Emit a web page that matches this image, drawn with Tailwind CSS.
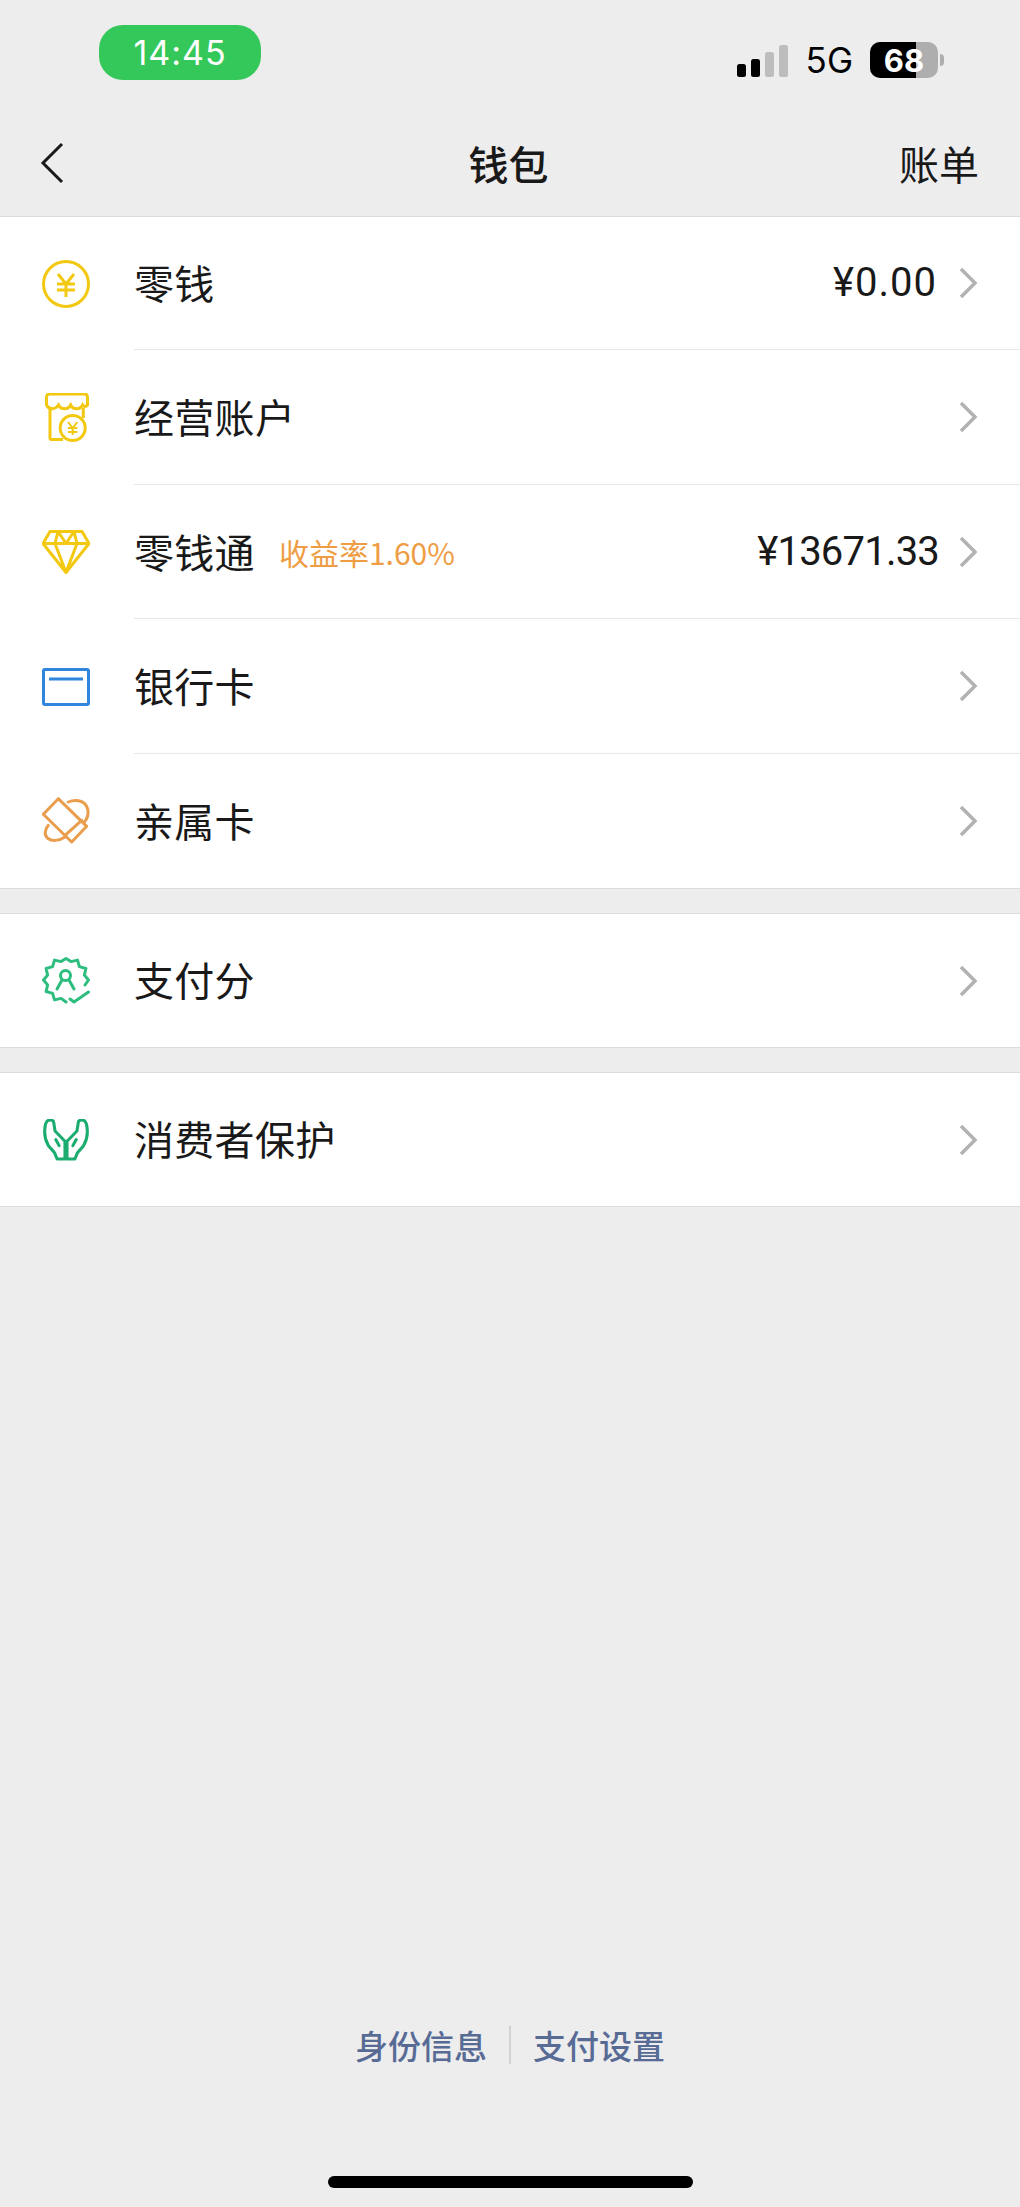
<!DOCTYPE html>
<html lang="zh-CN">
  <head>
    <meta charset="UTF-8" />
    <title>钱包</title>
    <script src="https://cdn.jsdelivr.net/npm/@tailwindcss/browser@4"></script>
  </head>
  <body class="bg-[#ededed] font-['Noto_Sans_CJK_SC',sans-serif] text-[#191919]">
    <div class="flex h-[2207px] w-[1020px] flex-col overflow-hidden">
      <!-- status bar -->
      <div class="flex h-[110px] shrink-0 items-start justify-between pl-[99px] pr-[76px]">
        <div class="mt-[25px] flex h-[55px] w-[162px] items-center justify-center rounded-[24px] bg-[#34c759] font-['Inter',sans-serif] text-[34px] tracking-[1px] text-white">14:45</div>
        <div class="mt-[42px] flex items-center">
          <svg width="52" height="32" viewBox="0 0 52 32" class="mr-[17px] mt-[2px]">
            <rect x="0" y="19" width="9" height="13" rx="2.5" fill="#000" />
            <rect x="14" y="14" width="9" height="18" rx="2.5" fill="#000" />
            <rect x="28" y="7" width="9" height="25" rx="2.5" fill="#bdbdbd" />
            <rect x="42" y="0" width="9" height="32" rx="2.5" fill="#bdbdbd" />
          </svg>
          <span class="mr-[17px] font-['Inter',sans-serif] text-[35px] leading-[36px] text-black">5G</span>
          <div class="relative flex h-[36px] w-[68px] items-center justify-center overflow-hidden rounded-[10px] bg-[#aeaeae]">
            <div class="absolute inset-y-0 left-0 w-[46px] bg-black"></div>
            <span class="relative font-['Inter',sans-serif] text-[31px] font-bold leading-none text-white">68</span>
          </div>
          <div class="ml-[2px] h-[12px] w-[4px] rounded-r-full bg-[#aeaeae]"></div>
        </div>
      </div>

      <!-- nav -->
      <div class="grid h-[107px] shrink-0 grid-cols-3 items-center border-b border-[#dcdcdc] pl-[40px] pr-[41px]">
        <svg width="24" height="42" viewBox="0 0 24 42" fill="none" stroke="#191919" stroke-width="3"><path d="M22 2 3 21l19 19" /></svg>
        <div class="pr-[2px] text-center text-[40px] font-medium leading-none">钱包</div>
        <div class="text-right text-[40px] leading-none">账单</div>
      </div>

      <!-- main group -->
      <div class="shrink-0 border-b border-[#dcdcdc] bg-white">
        <div class="flex h-[133px] items-center">
          <div class="flex w-[134px] shrink-0 justify-center pr-[3px]">
            <svg width="48" height="48" viewBox="0 0 48 48" fill="none" stroke="#f2c811" stroke-width="3"><circle cx="24" cy="24" r="22.5" /><path d="M16 14l8 10 8-10M15 24h18M15 30h18M24 24v13" /></svg>
          </div>
          <div class="flex h-full flex-1 items-center justify-between border-b border-[#e8e8e8] pr-[41px]">
            <span class="pb-[2px] text-[40px] leading-none tracking-[0.3px]">零钱</span>
            <div class="flex items-center">
              <span class="font-['Roboto',sans-serif] text-[40px] tracking-[1px]">¥0.00</span>
              <svg width="20" height="32" viewBox="0 0 20 32" fill="none" stroke="#b2b2b2" stroke-width="3.5" class="ml-[22px]"><path d="M2 2l14 14L2 30" /></svg>
            </div>
          </div>
        </div>
        <div class="flex h-[135px] items-center">
          <div class="flex w-[134px] shrink-0 justify-center pr-[3px]">
            <svg width="44" height="50" viewBox="0 0 44 50" fill="none" stroke="#f2c811" stroke-width="3" class="ml-[2px]">
              <path d="M1.500 12V4a3 3 0 0 1 3-3H39.500a3 3 0 0 1 3 3V12C41 14 39 14 37.700 12 35 17 28 17 25.700 12 23 17 16 17 13.500 12 10 17 4 17 1.500 12z" />
              <path d="M5 15V45a1.500 1.500 0 0 0 1.500 1.500H18M38.300 15V25" />
              <circle cx="27.700" cy="35" r="12.500" fill="#fff" />
              <path d="M23 29l4.700 6 4.700-6M23 35h9.400M23 39h9.400M27.700 35v7" stroke-width="2" />
            </svg>
          </div>
          <div class="flex h-full flex-1 items-center justify-between border-b border-[#e8e8e8] pr-[41px]">
            <span class="pb-[2px] text-[40px] leading-none tracking-[0.3px]">经营账户</span>
            <svg width="20" height="32" viewBox="0 0 20 32" fill="none" stroke="#b2b2b2" stroke-width="3.5"><path d="M2 2l14 14L2 30" /></svg>
          </div>
        </div>
        <div class="flex h-[134px] items-center">
          <div class="flex w-[134px] shrink-0 justify-center pr-[3px]">
            <svg width="48" height="44" viewBox="0 0 48 44" fill="none" stroke="#f2c811" stroke-width="3" stroke-linejoin="round"><path d="M8 1.500H40L47 13.500 24 42.500 1 13.500zM1 13.500H47M16 1.500 13 13.500 24 42.500 35 13.500 32 1.500M16 1.500 24 13.500 32 1.500" /></svg>
          </div>
          <div class="flex h-full flex-1 items-center justify-between border-b border-[#e8e8e8] pr-[41px]">
            <div class="flex items-center">
              <span class="pb-[2px] text-[40px] leading-none tracking-[0.3px]">零钱通</span>
              <span class="ml-[24px] text-[30px] leading-none text-[#ee9d44]">收益率1.60%</span>
            </div>
            <div class="flex items-center">
              <span class="font-['Roboto',sans-serif] text-[40px] tracking-[-0.8px]">¥13671.33</span>
              <svg width="20" height="32" viewBox="0 0 20 32" fill="none" stroke="#b2b2b2" stroke-width="3.5" class="ml-[20px]"><path d="M2 2l14 14L2 30" /></svg>
            </div>
          </div>
        </div>
        <div class="flex h-[135px] items-center">
          <div class="flex w-[134px] shrink-0 justify-center pr-[3px]">
            <svg width="48" height="38" viewBox="0 0 48 38" fill="none" stroke="#2f86dc" stroke-width="3"><rect x="1.500" y="1.500" width="45" height="35" rx="1.500" /><path d="M7 11h34" /></svg>
          </div>
          <div class="flex h-full flex-1 items-center justify-between border-b border-[#e8e8e8] pr-[41px]">
            <span class="pb-[2px] text-[40px] leading-none tracking-[0.3px]">银行卡</span>
            <svg width="20" height="32" viewBox="0 0 20 32" fill="none" stroke="#b2b2b2" stroke-width="3.5"><path d="M2 2l14 14L2 30" /></svg>
          </div>
        </div>
        <div class="flex h-[134px] items-center">
          <div class="flex w-[134px] shrink-0 justify-center pr-[3px]">
            <svg width="48" height="48" viewBox="0 0 48 48" fill="none" stroke="#ea9e4d" stroke-width="3" stroke-linejoin="round" stroke-linecap="round">
              <path d="M16.300 1.700 44.700 29.300 29.700 45 1.300 17.300z" />
              <path d="M23 38.300 39.700 23.300" />
              <path d="M26.300 5C33 2 41 3.300 44.500 9 47.500 15 46 22 41.300 26" />
              <path d="M6.300 28.300C2.500 33 2 38.300 6 41.500 10 44.500 17 44 23 40" />
            </svg>
          </div>
          <div class="flex h-full flex-1 items-center justify-between pr-[41px]">
            <span class="pb-[2px] text-[40px] leading-none tracking-[0.3px]">亲属卡</span>
            <svg width="20" height="32" viewBox="0 0 20 32" fill="none" stroke="#b2b2b2" stroke-width="3.5"><path d="M2 2l14 14L2 30" /></svg>
          </div>
        </div>
      </div>

      <!-- 支付分 -->
      <div class="mt-[24px] flex h-[135px] shrink-0 items-center border-y border-[#dcdcdc] bg-white">
        <div class="flex w-[134px] shrink-0 justify-center pr-[3px]">
          <svg width="48" height="48" viewBox="0 0 48 48" fill="none" stroke="#2dbd7e" stroke-width="3" stroke-linejoin="round" stroke-linecap="round">
            <path d="M24 45 19.100 41.400 12.500 42.900 10.600 36.400 4.100 34.500 5.600 27.900 1.500 23 5.600 18.100 4.100 11.500 10.600 9.600 12.500 3.100 19.100 4.600 24 1.500 28.900 4.600 35.500 3.100 37.400 9.600 43.900 11.500 42.400 18.100 46.500 23 43 28" />
            <circle cx="23.500" cy="18.500" r="5" />
            <path d="M20 23 15 32M27 23 32 32" />
            <path d="M28 42 32 45 46.500 35" />
          </svg>
        </div>
        <div class="flex flex-1 items-center justify-between pr-[41px]">
          <span class="pb-[4px] text-[40px] leading-none tracking-[0.3px]">支付分</span>
          <svg width="20" height="32" viewBox="0 0 20 32" fill="none" stroke="#b2b2b2" stroke-width="3.5"><path d="M2 2l14 14L2 30" /></svg>
        </div>
      </div>

      <!-- 消费者保护 -->
      <div class="mt-[24px] flex h-[135px] shrink-0 items-center border-y border-[#dcdcdc] bg-white">
        <div class="flex w-[134px] shrink-0 justify-center pr-[3px]">
          <svg width="46" height="42" viewBox="0 0 44 41" fill="none" stroke="#1aad6f" stroke-width="3" stroke-linecap="round" stroke-linejoin="round">
            <path d="M21 39H13.300L11 33.300C8 29 5.500 28 4.300 25 1.500 20 .500 12 2 5 3 2 5 1 6 1 8.500 1 10 2 10 3.300L11.300 11.700 21 21.700z" />
            <path d="M23 39H30.700L33 33.300C36 29 38.500 28 39.700 25 42.500 20 43.500 12 42 5 41 2 39 1 38 1 35.500 1 34 2 34 3.300L32.700 11.700 23 21.700z" />
            <path d="M12 20 15.300 26M32 20 28.700 26" />
          </svg>
        </div>
        <div class="flex flex-1 items-center justify-between pr-[41px]">
          <span class="pb-[4px] text-[40px] leading-none tracking-[0.3px]">消费者保护</span>
          <svg width="20" height="32" viewBox="0 0 20 32" fill="none" stroke="#b2b2b2" stroke-width="3.5"><path d="M2 2l14 14L2 30" /></svg>
        </div>
      </div>

      <!-- footer -->
      <div class="mt-auto flex items-center justify-center text-[33px] font-medium leading-none text-[#576b95]">
        <span>身份信息</span>
        <div class="mx-[22px] h-[38px] w-[2px] bg-[#d2d2d2]"></div>
        <span>支付设置</span>
      </div>
      <div class="mx-auto mb-[19px] mt-[112px] h-[12px] w-[365px] shrink-0 rounded-full bg-black"></div>
    </div>
  </body>
</html>
